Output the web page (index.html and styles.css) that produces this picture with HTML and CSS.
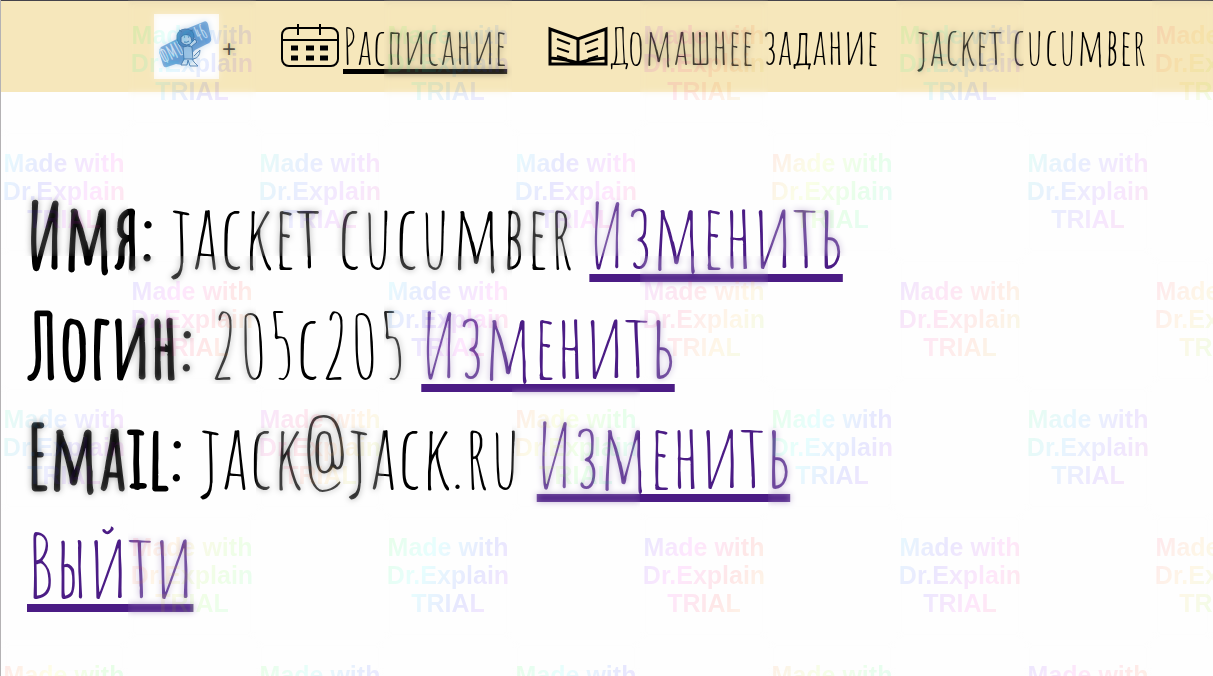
FILE: index.html
```
<!DOCTYPE html>
<html lang="ru">
<head>
<meta charset="utf-8">
<meta name="viewport" content="width=device-width, initial-scale=1">
<title>Профиль</title>
<link rel="stylesheet" href="styles.css">
</head>
<body>
<header class="topbar">
  <div class="brand">
    <svg class="logo" viewBox="0 0 65 65" role="img" aria-label="ФМШ 146">
      <rect width="65" height="65" fill="#fefefe"/>
      <path d="M7 33L23 25 27 17 49 8q4-2 5 2l3 14q1 3-2 5L41 36 28 51 22 50 13 53q-3 1-4-2L5 38q0-3 2-5z" fill="#5c97d0"/>
      <text class="logo-text" transform="translate(10 50) rotate(-26)">ФМШ</text>
      <text class="logo-text" transform="translate(39 30) rotate(-24)">146</text>
      <g stroke="#28619a" stroke-width="1" stroke-linejoin="round">
        <path d="M23 25q-1-9 8-10 9 0 9 8l-3 9q-7 3-12-2z" fill="#3f7fbb"/>
        <path d="M27 23q5-5 10 0l1 5q-5 6-11 0z" fill="#c5def0"/>
        <path d="M29 33q5-2 9 0l1 13h-9z" fill="#9fc8e8"/>
        <path d="M37 33l6-5-2-3-5 5" fill="#d9ebf6"/>
        <path d="M30 45l-3 6h6l1-5 2 6h8l-4-4-2-3z" fill="#e8f4fb"/>
        <path d="M39 45q7-1 7-9l-6 6M28 18l-3-2M36 17l3-1" fill="#d9ebf6"/>
        <path d="M30 23h1M34 23h1M30 28q3 1 5-1" fill="none"/>
      </g>
    </svg>
    <button class="add" type="button" aria-label="Добавить">+</button>
  </div>
  <a class="nav current" href="#schedule">
    <svg class="nav-icon" viewBox="0 0 60 44" fill="none" stroke="#000" stroke-width="2" aria-hidden="true">
      <rect x="2" y="4" width="56" height="38" rx="7"/>
      <path d="M2 16h56M18 0v11M40 0v11"/>
      <path d="M11 24h7M26 24h8M40 24h8M11 34h7M26 34h8M40 34h8" stroke-width="5"/>
    </svg>
    <span class="nav-text">Расписание</span>
  </a>
  <a class="nav" href="#homework">
    <svg class="nav-icon" viewBox="0 0 60 44" fill="none" stroke="#000" stroke-width="2" aria-hidden="true">
      <path d="M2 5l28 10 28-10v35H2zM30 15v25M2 34q16 1 28 5 12-4 28-5" stroke-width="3"/>
      <path d="M9 15l13 5M9 24l12 4M9 32l10 3M50 15l-13 5M50 24l-11 4M50 32l-10 3"/>
    </svg>
    <span class="nav-text">Домашнее задание</span>
  </a>
  <a class="nav" href="#profile"><span class="nav-text">jacket cucumber</span></a>
</header>
<main class="profile">
  <p class="row"><b>Имя:</b> <span>jacket cucumber</span> <a href="#name">Изменить</a></p>
  <p class="row"><b>Логин:</b> <span>205c205</span> <a href="#login">Изменить</a></p>
  <p class="row"><b>Email:</b> <span>jack@jack.ru</span> <a href="#email">Изменить</a></p>
  <p class="row"><a href="#logout">Выйти</a></p>
</main>
<div class="marks" aria-hidden="true"></div>
<script src="marks.js"></script>
</body>
</html>
```
FILE: styles.css
```
* { box-sizing: border-box; }
body {
  margin: 0;
  min-height: 100vh;
  position: relative;
  overflow: hidden;
  border-left: 1px solid #b4b2b4;
  background: #fefefe;
  color: #000;
  font-family: "Amatic SC", Lato, sans-serif;
}
.topbar {
  display: grid;
  grid-template-columns:
    minmax(0, 153fr) minmax(0, 126fr) minmax(0, 268fr)
    minmax(0, 369fr) minmax(0, 296fr);
  align-items: center;
  height: 92px;
  border-top: 1px solid #45434a;
  background: #f6e7bb;
}
.brand {
  grid-column: 2;
  display: flex;
  align-items: center;
  gap: 3px;
}
.logo { width: 65px; height: 65px; }
.logo-text {
  fill: #e4f1fa;
  font: bold 20px "Amatic SC", sans-serif;
}
.add {
  border: 0;
  padding: 4px 0 0;
  background: none;
  color: #222;
  font: 24px "Liberation Sans", sans-serif;
}
.nav {
  display: flex;
  align-items: center;
  gap: 3px;
  padding-bottom: 2px;
  color: #000;
  text-decoration: none;
  white-space: nowrap;
}
.nav-icon { width: 60px; height: 44px; }
.nav-text {
  font-size: 50px;
  line-height: 48px;
}
.current .nav-text {
  text-decoration: underline;
  text-decoration-thickness: 5px;
  text-underline-offset: 4px;
  text-decoration-skip-ink: none;
}
.profile { padding: 89px 26px 0; }
.row {
  margin: 0;
  font-size: 88px;
  line-height: 110px;
  white-space: nowrap;
}
.row b {
  font-weight: 400;
  -webkit-text-stroke: 3px #000;
}
.row a {
  color: #4b1c85;
  text-decoration: underline;
  text-decoration-thickness: 8px;
  text-underline-offset: 5px;
  text-decoration-skip-ink: none;
}
.marks {
  position: absolute;
  inset: 0;
  display: grid;
  grid-template-columns: repeat(10, 128px);
  grid-auto-rows: 128px;
  margin-left: -1px;
  overflow: hidden;
  pointer-events: none;
}
.mark {
  position: relative;
  padding-top: 21px;
}
.mark-on::before {
  content: "";
  position: absolute;
  inset: 0;
  opacity: 0.35;
  backdrop-filter: blur(3px);
}
.mark-text {
  display: block;
  opacity: 0.09;
  background: linear-gradient(120deg,
    hsl(var(--hue) 100% 50%),
    hsl(calc(var(--hue) + 60) 100% 50%),
    hsl(calc(var(--hue) + 120) 100% 50%),
    hsl(calc(var(--hue) + 180) 100% 50%));
  background-clip: text;
  color: transparent;
  font: bold 25px/28px "Liberation Sans", Arial, sans-serif;
  text-align: center;
  white-space: pre;
}
```
FILE: marks.js
```
// Starting hue of each mark, row by row; marks alternate like a checkerboard.
const hues = [
  [120, 100, 260, 110, 340],
  [180, 160, 180, 10, 160],
  [240, 180, 280, 260, 340],
  [150, 280, 10, 120, 140],
  [340, 120, 240, 190, 340],
  [0, 110, 120, 20, 250]
];
const marks = document.querySelector(".marks");
hues.forEach((row, y) => {
  for (let x = 0; x < 10; x++) {
    const tile = document.createElement("div");
    tile.className = "mark";
    if ((x + y) % 2 === 1) {
      tile.classList.add("mark-on");
      const text = document.createElement("span");
      text.className = "mark-text";
      text.style.setProperty("--hue", row[Math.floor(x / 2)]);
      text.textContent = "Made with\nDr.Explain\nTRIAL";
      tile.append(text);
    }
    marks.append(tile);
  }
});
```
